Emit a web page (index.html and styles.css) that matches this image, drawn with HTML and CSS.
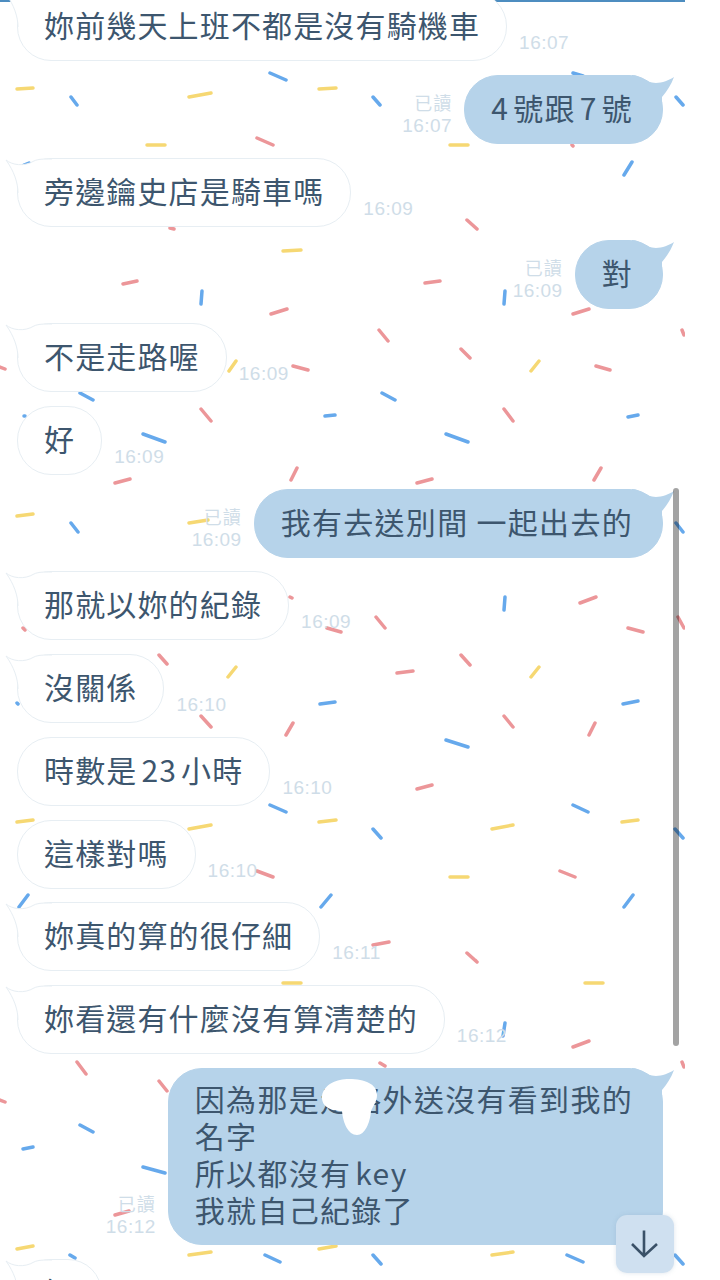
FILE: index.html
```html
<!DOCTYPE html>
<html lang="zh-Hant">
<head>
  <meta charset="UTF-8" />
  <meta name="viewport" content="width=device-width, initial-scale=1.0"/>
  <title>聊天室</title>
  <link rel="stylesheet" href="styles.css">
</head>
<body>
  <div class="screen">
    <!-- confetti wallpaper -->
    <svg class="confetti" width="685" height="1280" viewBox="0 0 685 1280">
      <path class="red" d="M257 138L273 145M170 228L174 229M123 284L137 281M271 314L287 309M572 145L573 146M467 220L477 229M425 283L440 281M573 314L589 309M0 367L5 369M293 366L308 370M201 409L211 421M115 483L130 479M297 468L291 480M290 597L292 598M327 628L341 632M23 628L25 630M379 330L388 341M461 349L470 358M596 366L610 370M682 330L684 335M504 409L513 421M417 483L432 479M601 468L594 480M580 603L596 597M376 617L385 628M628 628L643 632M678 617L684 628M397 673L413 671M461 655L470 665M504 716L513 727M595 723L589 735M417 789L432 785M560 871L575 877M373 945L389 942M467 953L477 962M159 655L167 664M201 716L211 727M293 723L286 735M257 871L273 877M77 1062L86 1074M159 1081L167 1091M0 1100L5 1102M115 1215L129 1211M573 1047L589 1041M380 1063L385 1066M682 1062L684 1067M475 960L476 961"/>
      <path class="blue" d="M71 97L77 105M270 73L286 80M24 165L29 163M202 291L201 304M573 73L583 76M373 97L380 105M676 97L683 105M632 162L624 175M505 291L504 304M80 393L93 400M325 416L335 415M24 416L25 416M143 434L165 442M71 523L78 532M382 393L395 400M628 417L638 415M446 434L468 442M676 523L683 532M505 597L504 610M623 704L638 701M446 740L468 747M573 805L588 812M373 829L381 838M675 829L683 838M633 895L624 907M320 704L335 702M17 703L18 704M270 805L286 812M28 895L19 907M331 895L321 907M80 1125L93 1132M23 1149L33 1147M143 1167L165 1173M265 1255L280 1262M70 1255L75 1258M505 1023L503 1036M373 1255L381 1264M567 1255L583 1262M675 1255L683 1264"/>
      <path class="yellow" d="M17 89L33 88M189 97L211 93M319 89L336 88M147 145L165 145M283 251L301 250M450 145L468 145M236 361L229 371M17 516L33 514M189 523L208 520M539 361L531 371M539 667L531 677M492 829L513 825M622 822L638 820M450 877L468 877M236 667L228 677M17 822L33 820M189 829L211 825M319 822L336 820M283 983L301 983M17 1249L33 1246M189 1255L211 1252M319 1249L336 1246M585 983L603 983M492 1255L513 1252"/>
    </svg>

    <div class="topline"></div>

    <main class="chat">
      <div class="msg">
        <div class="bubble"><svg class="tail" width="1" height="1"><path class="tail-fill" d="M-12 1C-6 6 6 8 16 2C20 0 25 0 34 0L0 34C0 24-4 12-12 1Z"/><path class="tail-line" d="M34 0C25 0 20 0 16 2C6 8-6 6-12 1C-4 12 0 24 0 34"/></svg>妳前幾天上班不都是沒有騎機車</div>
        <span class="time">16:07</span>
      </div>
      <div class="msg me">
        <div class="meta"><span>已讀</span><span>16:07</span></div>
        <div class="bubble"><svg class="tail" width="1" height="1"><path d="M-30 0C-22 0-18 6-10 7.5C-3 9 6 6 12 2C9 10 5 16 0 22L0 34L-30 34Z"/></svg><span class="latin first">4</span>號跟<span class="latin">7</span>號</div>
      </div>
      <div class="msg">
        <div class="bubble"><svg class="tail" width="1" height="1"><path class="tail-fill" d="M-12 1C-6 6 6 8 16 2C20 0 25 0 34 0L0 34C0 24-4 12-12 1Z"/><path class="tail-line" d="M34 0C25 0 20 0 16 2C6 8-6 6-12 1C-4 12 0 24 0 34"/></svg>旁邊鑰史店是騎車嗎</div>
        <span class="time">16:09</span>
      </div>
      <div class="msg me">
        <div class="meta"><span>已讀</span><span>16:09</span></div>
        <div class="bubble"><svg class="tail" width="1" height="1"><path d="M-30 0C-22 0-18 6-10 7.5C-3 9 6 6 12 2C9 10 5 16 0 22L0 34L-30 34Z"/></svg>對</div>
      </div>
      <div class="msg">
        <div class="bubble"><svg class="tail" width="1" height="1"><path class="tail-fill" d="M-12 1C-6 6 6 8 16 2C20 0 25 0 34 0L0 34C0 24-4 12-12 1Z"/><path class="tail-line" d="M34 0C25 0 20 0 16 2C6 8-6 6-12 1C-4 12 0 24 0 34"/></svg>不是走路喔</div>
        <span class="time">16:09</span>
      </div>
      <div class="msg">
        <div class="bubble">好</div>
        <span class="time">16:09</span>
      </div>
      <div class="msg me">
        <div class="meta"><span>已讀</span><span>16:09</span></div>
        <div class="bubble"><svg class="tail" width="1" height="1"><path d="M-30 0C-22 0-18 6-10 7.5C-3 9 6 6 12 2C9 10 5 16 0 22L0 34L-30 34Z"/></svg>我有去送別間 一起出去的</div>
      </div>
      <div class="msg">
        <div class="bubble"><svg class="tail" width="1" height="1"><path class="tail-fill" d="M-12 1C-6 6 6 8 16 2C20 0 25 0 34 0L0 34C0 24-4 12-12 1Z"/><path class="tail-line" d="M34 0C25 0 20 0 16 2C6 8-6 6-12 1C-4 12 0 24 0 34"/></svg>那就以妳的紀錄</div>
        <span class="time">16:09</span>
      </div>
      <div class="msg">
        <div class="bubble"><svg class="tail" width="1" height="1"><path class="tail-fill" d="M-12 1C-6 6 6 8 16 2C20 0 25 0 34 0L0 34C0 24-4 12-12 1Z"/><path class="tail-line" d="M34 0C25 0 20 0 16 2C6 8-6 6-12 1C-4 12 0 24 0 34"/></svg>沒關係</div>
        <span class="time">16:10</span>
      </div>
      <div class="msg">
        <div class="bubble">時數是<span class="latin">23</span>小時</div>
        <span class="time">16:10</span>
      </div>
      <div class="msg">
        <div class="bubble">這樣對嗎</div>
        <span class="time">16:10</span>
      </div>
      <div class="msg">
        <div class="bubble"><svg class="tail" width="1" height="1"><path class="tail-fill" d="M-12 1C-6 6 6 8 16 2C20 0 25 0 34 0L0 34C0 24-4 12-12 1Z"/><path class="tail-line" d="M34 0C25 0 20 0 16 2C6 8-6 6-12 1C-4 12 0 24 0 34"/></svg>妳真的算的很仔細</div>
        <span class="time">16:11</span>
      </div>
      <div class="msg">
        <div class="bubble"><svg class="tail" width="1" height="1"><path class="tail-fill" d="M-12 1C-6 6 6 8 16 2C20 0 25 0 34 0L0 34C0 24-4 12-12 1Z"/><path class="tail-line" d="M34 0C25 0 20 0 16 2C6 8-6 6-12 1C-4 12 0 24 0 34"/></svg>妳看還有什麼沒有算清楚的</div>
        <span class="time">16:12</span>
      </div>
      <div class="msg me">
        <div class="meta"><span>已讀</span><span>16:12</span></div>
        <div class="bubble long"><svg class="tail" width="1" height="1"><path d="M-30 0C-22 0-18 6-10 7.5C-3 9 6 6 12 2C9 10 5 16 0 22L0 34L-30 34Z"/></svg>因為那是走路外送沒有看到我的<br>名字<br>所以都沒有<span class="latin">key</span><br>我就自己紀錄了<svg class="blob" width="60" height="60" viewBox="0 0 60 60"><path d="M1 18C3 6 16 1 28 1C44 1 56 6 56 17C56 24 52 28 50 33C49 45 44 57 36 57C27 57 22 45 21 33C12 33 0 30 1 18Z"/></svg></div>
      </div>
      <div class="msg">
        <div class="bubble"><svg class="tail" width="1" height="1"><path class="tail-fill" d="M-12 1C-6 6 6 8 16 2C20 0 25 0 34 0L0 34C0 24-4 12-12 1Z"/><path class="tail-line" d="M34 0C25 0 20 0 16 2C6 8-6 6-12 1C-4 12 0 24 0 34"/></svg>好</div>
      </div>
    </main>

    <div class="scrollbar"></div>
    <button class="to-bottom" aria-label="scroll to bottom">
      <svg width="30" height="30" viewBox="0 0 30 30"><path d="M14 1.5V27M2 15L14 27L27 15"/></svg>
    </button>
  </div>
</body>
</html>
```

FILE: styles.css
```css
body {
  margin: 0;
  background: white;
  font-family: "Noto Sans CJK TC", "Noto Sans", sans-serif;
}
.screen {
  position: relative;
  width: 720px;
  height: 1280px;
  overflow: hidden;
  background: white;
}
.confetti {
  position: absolute;
  left: 0;
  top: 0;
  fill: none;
  stroke-width: 3.5;
  stroke-linecap: round;
  filter: blur(0.4px);
}
.red {
  stroke: #ec9699;
}
.blue {
  stroke: #66a9ec;
}
.yellow {
  stroke: #f6d873;
}
.topline {
  position: absolute;
  left: 0;
  top: 0;
  width: 685px;
  height: 2px;
  background: #4d8dc0;
}
.chat {
  position: relative;
  width: 685px;
  box-sizing: border-box;
  display: flex;
  flex-direction: column;
  gap: 13.75px;
  margin-top: -8px;
  padding: 0 22px 0 17px;
}
.msg {
  display: flex;
  align-items: flex-end;
  gap: 12px;
}
.me {
  justify-content: flex-end;
}
.bubble {
  position: relative;
  padding: 13px 26px 17px;
  border: 1px solid #e7eef3;
  border-radius: 34px;
  background: white;
  color: #3d566e;
  font-size: 30px;
  line-height: 37px;
  letter-spacing: 1.15px;
  white-space: nowrap;
}
.me .bubble {
  padding-right: 29px;
  border-color: #b6d3ea;
  background: #b6d3ea;
  letter-spacing: 1.3px;
}
.me .long {
  padding-top: 11px;
  padding-bottom: 16px;
}
.latin {
  margin: 0 4px;
}
.first {
  margin-left: 0;
}
.time,
.meta {
  color: #cfdde8;
  font-family: "Liberation Sans", sans-serif;
  font-size: 19px;
  line-height: 23px;
  letter-spacing: 0.5px;
  margin-bottom: 7px;
}
.meta {
  display: flex;
  flex-direction: column;
  align-items: flex-end;
}
.meta span:first-child {
  font-family: "Noto Sans CJK TC", sans-serif;
  font-size: 18px;
  letter-spacing: 1px;
}
.tail {
  position: absolute;
  left: 0;
  top: 0;
  overflow: visible;
}
.tail-fill {
  fill: white;
}
.tail-line {
  fill: none;
  stroke: #e7eef3;
  stroke-width: 1;
}
.me .tail {
  left: auto;
  right: -1px;
  top: -1px;
  fill: #b6d3ea;
}
.blob {
  position: absolute;
  left: 152px;
  top: 9px;
  fill: white;
}
.scrollbar {
  position: absolute;
  left: 673px;
  top: 488px;
  width: 6px;
  height: 558px;
  border-radius: 3px;
  background: rgba(0, 0, 0, 0.36);
}
.to-bottom {
  position: absolute;
  left: 616px;
  top: 1215px;
  width: 58px;
  height: 58px;
  padding: 0;
  border: none;
  border-radius: 11px;
  background: #cfe0f0;
  box-shadow: 0 0 4px rgba(120, 150, 180, 0.25);
  display: flex;
  align-items: center;
  justify-content: center;
}
.to-bottom svg {
  fill: none;
  stroke: #3a5168;
  stroke-width: 2.6;
}
```
